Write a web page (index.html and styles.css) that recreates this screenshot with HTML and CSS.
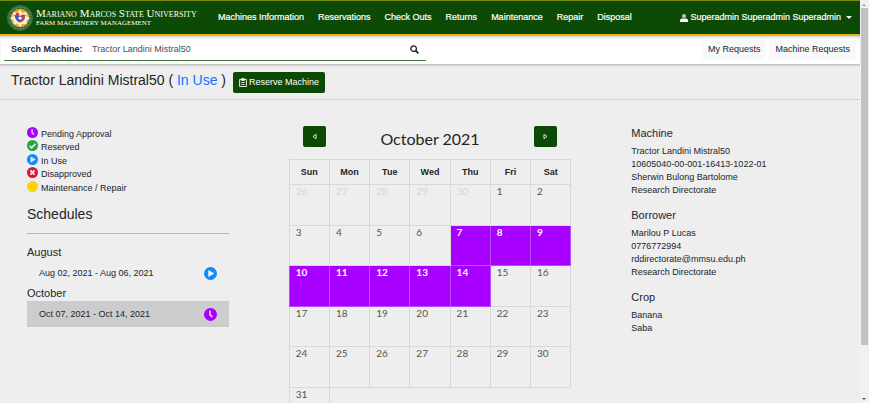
FILE: index.html
```
<!DOCTYPE html>
<html lang="en">
<head>
<meta charset="utf-8">
<title>Farm Machinery Management</title>
<link rel="stylesheet" href="styles.css">
</head>
<body>
<svg class="sprite" aria-hidden="true">
  <symbol id="clock" viewBox="0 0 16 16"><circle cx="8" cy="8" r="8" fill="#a800ff"/><path d="M7.4 3.2v5.2l2.8 2.6" fill="none" stroke="#eee" stroke-width="1.9"/></symbol>
  <symbol id="check" viewBox="0 0 16 16"><circle cx="8" cy="8" r="8" fill="#28a044"/><path d="M3.6 8.4l3 3 5.8-6" fill="none" stroke="#eee" stroke-width="2.3"/></symbol>
  <symbol id="play" viewBox="0 0 16 16"><circle cx="8" cy="8" r="8" fill="#0d8bff"/><path d="M5.6 4.2v7.6L12.2 8z" fill="#eee" stroke="#eee" stroke-width=".8" stroke-linejoin="round"/></symbol>
  <symbol id="cross" viewBox="0 0 16 16"><circle cx="8" cy="8" r="8" fill="#d3173c"/><path d="M5 5l6 6M11 5l-6 6" stroke="#eee" stroke-width="2.8"/></symbol>
  <symbol id="dot" viewBox="0 0 16 16"><circle cx="8" cy="8" r="8" fill="#ffd500"/></symbol>
</svg>
<div class="window">
  <div class="page">
    <header class="topbar">
      <a class="brand" href="#">
        <svg class="seal" viewBox="0 0 52 52" aria-hidden="true">
          <circle cx="26" cy="26" r="25" fill="#1d5a28" stroke="#6f9468" stroke-width="1"/>
          <circle cx="26" cy="26" r="21.5" fill="none" stroke="#86a57e" stroke-width="3" stroke-dasharray="1.6 1.6"/>
          <circle cx="26" cy="26" r="18" fill="#f0a51e" stroke="#d8d9a0" stroke-width="1"/>
          <path d="M26 9l5 7 8-2 0 8 7 4-7 5 0 8-8-2-5 7-5-7-8 2 0-8-7-5 7-4 0-8 8 2z" fill="#fff0c4"/>
          <path d="M15 20q6-3 11 2v13q-9-2-11-15z" fill="#2c5fc4"/>
          <path d="M37 20q-6-3-11 2v13q9-2 11-15z" fill="#d8344a"/>
          <circle cx="21" cy="19" r="3.5" fill="#d8344a"/>
          <circle cx="31" cy="28" r="4" fill="#3f6fd0"/>
          <path d="M22 26l4-3 4 3-4 4z" fill="#fff"/>
        </svg>
        <span class="brand-text">
          <span class="brand-name">Mariano Marcos State University</span>
          <span class="brand-sub">Farm Machinery Management</span>
        </span>
      </a>
      <nav class="nav">
        <a href="#">Machines Information</a>
        <a href="#">Reservations</a>
        <a href="#">Check Outs</a>
        <a href="#">Returns</a>
        <a href="#">Maintenance</a>
        <a href="#">Repair</a>
        <a href="#">Disposal</a>
      </nav>
      <button class="user" type="button">
        <svg class="user-icon" viewBox="0 0 16 16" aria-hidden="true"><circle cx="8" cy="4.2" r="4" fill="#b9cbb6"/><path d="M0 16v-3q0-4 4-4h8q4 0 4 4v3z" fill="#fff"/></svg>
        Superadmin Superadmin Superadmin
        <span class="caret"></span>
      </button>
    </header>
    <div class="toolbar">
      <form class="search">
        <label for="machine">Search Machine:</label>
        <input id="machine" type="text" value="Tractor Landini Mistral50">
        <button type="button" aria-label="Search"><svg viewBox="0 0 16 16"><circle cx="6.5" cy="6.5" r="5" fill="none" stroke="#222" stroke-width="2.4"/><path d="M10 10l5 5" stroke="#222" stroke-width="3"/></svg></button>
      </form>
      <div class="requests">
        <button type="button">My Requests</button>
        <button type="button">Machine Requests</button>
      </div>
    </div>
    <div class="titlebar">
      <h1>Tractor Landini Mistral50 ( <a href="#">In Use</a> )</h1>
      <button class="reserve" type="button">
        <svg viewBox="0 0 14 16" aria-hidden="true"><path d="M1 2.5h12v12.7H1z" fill="none" stroke="#fff" stroke-width="1.6"/><path d="M4 .5h6V5H4z" fill="#fff"/><path d="M4 8h6M4 11.5h6" stroke="#fff" stroke-width="1.4"/></svg>
        Reserve Machine
      </button>
    </div>
    <main class="content">
      <section class="side">
        <ul class="legend">
          <li><svg><use href="#clock"/></svg>Pending Approval</li>
          <li><svg><use href="#check"/></svg>Reserved</li>
          <li><svg><use href="#play"/></svg>In Use</li>
          <li><svg><use href="#cross"/></svg>Disapproved</li>
          <li><svg><use href="#dot"/></svg>Maintenance / Repair</li>
        </ul>
        <h2>Schedules</h2>
        <h3>August</h3>
        <div class="slot">Aug 02, 2021 - Aug 06, 2021<svg><use href="#play"/></svg></div>
        <h3>October</h3>
        <div class="slot active">Oct 07, 2021 - Oct 14, 2021<svg><use href="#clock"/></svg></div>
      </section>
      <section class="calendar">
        <div class="cal-head">
          <button type="button" aria-label="Previous month"><svg viewBox="0 0 8 10"><path d="M6.5 1.5v7L1.5 5z" fill="none" stroke="#fff" stroke-width="1.3"/></svg></button>
          <h2>October 2021</h2>
          <button type="button" aria-label="Next month"><svg viewBox="0 0 8 10"><path d="M1.5 1.5v7L6.5 5z" fill="none" stroke="#fff" stroke-width="1.3"/></svg></button>
        </div>
        <table>
          <thead><tr><th>Sun</th><th>Mon</th><th>Tue</th><th>Wed</th><th>Thu</th><th>Fri</th><th>Sat</th></tr></thead>
          <tbody>
            <tr><td class="out">26</td><td class="out">27</td><td class="out">28</td><td class="out">29</td><td class="out">30</td><td>1</td><td>2</td></tr>
            <tr><td>3</td><td>4</td><td>5</td><td>6</td><td class="booked">7</td><td class="booked">8</td><td class="booked">9</td></tr>
            <tr><td class="booked">10</td><td class="booked">11</td><td class="booked">12</td><td class="booked">13</td><td class="booked">14</td><td>15</td><td>16</td></tr>
            <tr><td>17</td><td>18</td><td>19</td><td>20</td><td>21</td><td>22</td><td>23</td></tr>
            <tr><td>24</td><td>25</td><td>26</td><td>27</td><td>28</td><td>29</td><td>30</td></tr>
            <tr><td>31</td></tr>
          </tbody>
        </table>
      </section>
      <section class="info">
        <h3>Machine</h3>
        <p>Tractor Landini Mistral50</p>
        <p>10605040-00-001-16413-1022-01</p>
        <p>Sherwin Bulong Bartolome</p>
        <p>Research Directorate</p>
        <h3>Borrower</h3>
        <p>Marilou P Lucas</p>
        <p>0776772994</p>
        <p>rddirectorate@mmsu.edu.ph</p>
        <p>Research Directorate</p>
        <h3>Crop</h3>
        <p>Banana</p>
        <p>Saba</p>
      </section>
    </main>
  </div>
  <div class="scrollbar" aria-hidden="true">
    <span class="arrow up"></span>
    <span class="thumb"></span>
    <span class="arrow down"></span>
  </div>
</div>
</body>
</html>
```
FILE: styles.css
```
* { box-sizing: border-box; }
body {
  margin: 0;
  background: #eee;
  color: #212529;
  font: 9px/13px "Liberation Sans", Arial, sans-serif;
}
h1, h2, h3, p, ul { margin: 0; padding: 0; font-weight: normal; }
a { color: inherit; text-decoration: none; }
button, input { font: inherit; color: inherit; border: 0; background: none; padding: 0; }
svg { display: block; flex: none; }
.sprite { position: absolute; width: 0; height: 0; }

.window { display: flex; height: 100vh; overflow: hidden; }
.page { flex: 1; min-width: 0; overflow: hidden; }

.topbar {
  display: flex;
  align-items: center;
  height: 36px;
  padding: 0 8px 0 7px;
  background: #0d4a06;
  border-top: 1px solid #7d8a04;
  border-bottom: 2px solid #e3b310;
  color: #fff;
}
.brand { display: flex; align-items: center; gap: 3px; width: 211px; }
.seal { width: 26px; height: 26px; }
.brand-text { display: flex; flex-direction: column; font-family: "Liberation Serif", serif; white-space: nowrap; }
.brand-name { font-size: 11px; line-height: 11px; font-variant: small-caps; }
.brand-sub { font-size: 7px; line-height: 9px; text-transform: uppercase; }
.nav { display: flex; gap: 14px; white-space: nowrap; }
.nav a, .user { -webkit-text-stroke: 0.2px #fff; }
.user { display: flex; align-items: center; gap: 2px; margin-left: auto; white-space: nowrap; }
.user-icon { width: 8px; height: 8px; }
.caret { margin-left: 3px; border: 3px solid transparent; border-top-color: #fff; border-bottom: 0; }

.toolbar {
  display: flex;
  justify-content: space-between;
  height: 29px;
  padding: 3px 4px 4px;
  background: #fff;
  border-bottom: 1px solid #c4c4c4;
  box-shadow: 0 1px 2px #ccc, inset 0 2px 2px #ddd;
}
.search {
  display: flex;
  align-items: center;
  flex: 0 0 422px;
  height: 22px;
  padding: 0 7px;
  border-bottom: 1px solid #3f7a3c;
}
.search label { width: 81px; font-weight: bold; }
.search input { flex: 1; color: #495057; outline: 0; }
.search svg { width: 9px; height: 9px; }
.requests { display: flex; gap: 3px; }
.requests button { padding: 0 6px; height: 21px; border-radius: 2px; background: #f8f9fa; }

.titlebar {
  display: flex;
  align-items: center;
  gap: 7px;
  height: 35px;
  padding: 0 11px;
  border-bottom: 1px solid #d2d2d2;
}
.titlebar h1 { font-size: 14px; line-height: 18px; padding-bottom: 4px; }
.titlebar a { color: #1473ff; }
.reserve {
  display: flex;
  align-items: center;
  gap: 2px;
  height: 21px;
  padding: 0 6px;
  border-radius: 2px;
  background: #0d4a06;
  color: #fff;
}
.reserve svg { width: 8px; height: 9px; }

.content { display: grid; grid-template-columns: 202fr 283fr 202fr; gap: 60px; padding: 26px 27px 0; }

.legend { list-style: none; }
.legend li { display: flex; gap: 3px; height: 14px; line-height: 16px; }
.legend li:nth-child(odd) { height: 13px; }
.legend svg { width: 11px; height: 11px; margin-top: 1px; }
.side h2 { margin-top: 13px; padding-bottom: 11px; border-bottom: 1px solid #bbb; font-size: 14px; line-height: 16px; }
.side h3 { font-size: 11px; line-height: 15px; }
.side h2 + h3 { margin-top: 11px; }
.slot { display: flex; align-items: center; justify-content: space-between; height: 26px; padding: 0 12px; }
.slot svg { width: 13px; height: 13px; }
.slot.active { background: #ccc; }

.cal-head { display: flex; align-items: flex-start; justify-content: space-between; height: 33px; padding: 0 14px; }
.cal-head button { display: grid; place-items: center; width: 23px; height: 21px; border-radius: 2px; background: #0d4a06; }
.cal-head button svg { width: 5px; height: 7px; }
.cal-head h2 { font: 16px/25px Lato, sans-serif; }
table { width: 100%; table-layout: fixed; border-collapse: collapse; }
th, td { border: 1px solid #d8d8d8; }
th { height: 25px; padding: 0; }
td { height: 40px; padding: 0 6px; font: 10px/13px Lato, sans-serif; color: #555; vertical-align: top; }
tr:nth-child(odd) td { height: 41px; }
td.out { color: #d5d5d5; }
td.booked { background: #a800ff; border-color: #b84dff; color: #fff; font-weight: bold; }

.info h3 { margin-bottom: 4px; font-size: 11px; line-height: 15px; }
.info p + h3 { margin-top: 11px; }

.scrollbar { display: flex; flex-direction: column; align-items: center; justify-content: space-between; width: 9px; padding: 4px 1px 3px 0; background: #f1f1f1; }
.thumb { width: 7px; height: 85%; margin: 2px 0 auto; background: #c1c1c1; }
.arrow { border: 2px solid transparent; }
.up { border-top: 0; border-bottom-color: #999; }
.down { border-bottom: 0; border-top-color: #555; }
```
